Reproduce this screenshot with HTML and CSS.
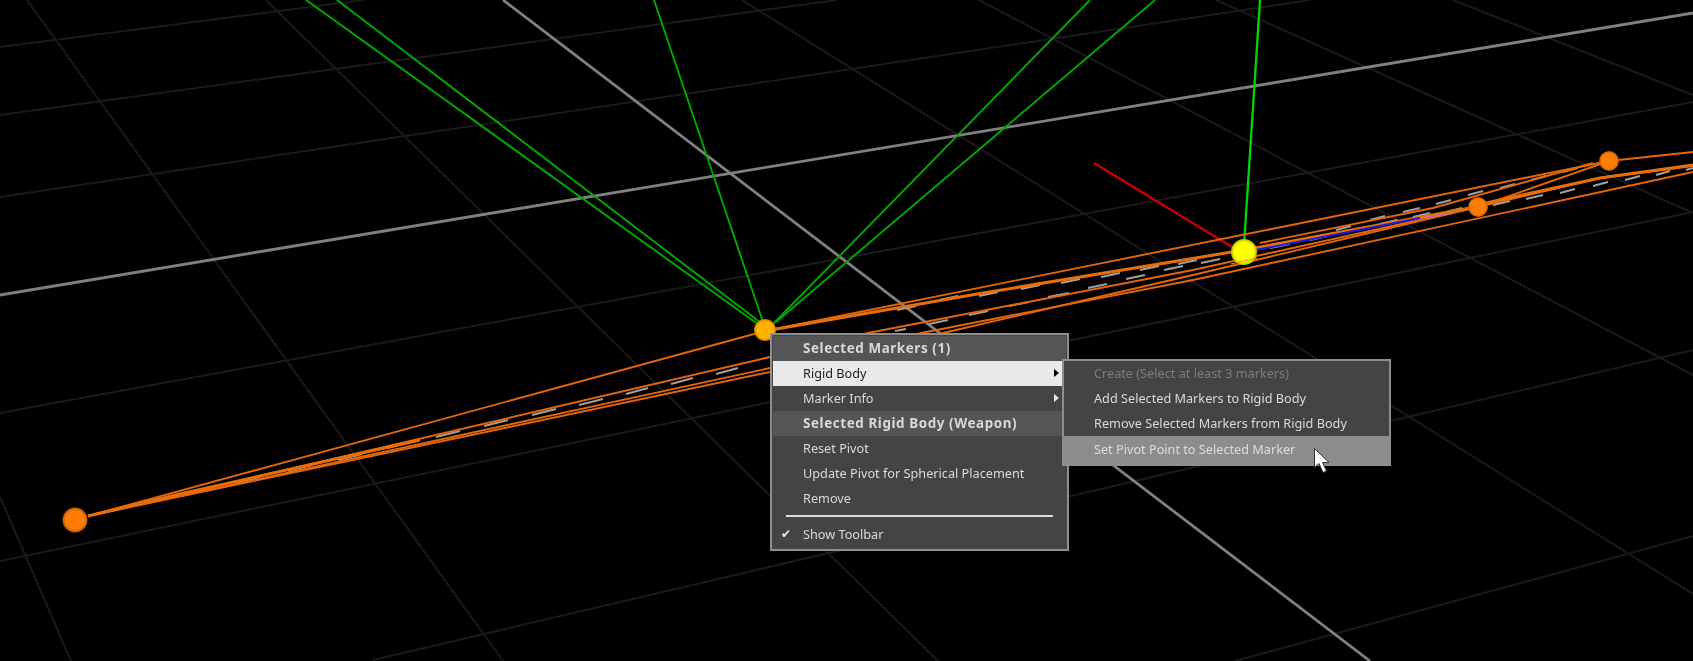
FILE: index.html
```html
<!DOCTYPE html>
<html lang="en">
<head>
<meta charset="utf-8">
<title>Selected Markers context menu</title>
<link rel="stylesheet" href="styles.css">
</head>
<body>
<main class="viewport">
  <svg class="scene" viewBox="0 0 1693 661" width="1693" height="661" aria-hidden="true">
    <g class="grid">
      <line x1="0" y1="47" x2="364" y2="0"/>
      <line x1="0" y1="115" x2="837" y2="0"/>
      <line x1="0" y1="197" x2="1310" y2="0"/>
      <line x1="0" y1="413" x2="1693" y2="102"/>
      <line x1="0" y1="561" x2="1693" y2="212"/>
      <line x1="373" y1="660" x2="1693" y2="350"/>
      <line x1="1235" y1="661" x2="1693" y2="536"/>
      <line x1="0" y1="497" x2="71" y2="661"/>
      <line x1="27" y1="0" x2="503" y2="661"/>
      <line x1="266" y1="0" x2="938" y2="661"/>
      <line x1="742" y1="0" x2="1693" y2="594"/>
      <line x1="979" y1="0" x2="1693" y2="375"/>
      <line x1="1216" y1="0" x2="1693" y2="213"/>
      <line x1="1453" y1="0" x2="1693" y2="95"/>
    </g>
    <g class="axis">
      <line x1="0" y1="295" x2="1693" y2="13"/>
      <line x1="503" y1="0" x2="1370" y2="661"/>
    </g>
    <g class="rays">
      <line x1="306" y1="0" x2="759" y2="325"/>
      <line x1="337" y1="0" x2="761" y2="323"/>
      <line x1="654" y1="0" x2="763" y2="322"/>
      <line x1="1090" y1="0" x2="772" y2="325"/>
      <line x1="1155" y1="0" x2="776" y2="322"/>
    </g>
    <line class="ray-bright" x1="1260" y1="0" x2="1244" y2="245"/>
    <line class="ray-red" x1="1094" y1="163" x2="1232" y2="247"/>
    <path class="dashes" d="M187 494L211 488M236 483L260 477M288 471L312 465M338 460L362 454M387 448L411 442M436 437L460 431M484 426L508 420M532 415L556 409M579 405L603 399M626 394L648 388M671 384L693 378M716 374L738 368M897 310L916 306M939 300L958 296M979 296L998 292M1021 289L1040 285M1061 283L1080 279M1101 277L1120 273M1140 270L1159 266M1178 264L1197 260M1268 247L1285 243M1300 240L1318 236M1336 230L1351 226M1370 220L1385 216M1403 212L1420 208M1436 204L1451 200M1468 195L1483 191M1500 188L1515 184M1531 180L1546 176M1563 172L1578 168M895 331L906 329M929 324L948 320M969 315L988 311M1009 306L1029 302M1048 297L1069 293M1088 288L1107 284M1126 279L1145 275M1164 270L1183 266M1201 263L1220 259M1240 254L1258 250M1270 248L1290 244M1310 240L1328 236M1345 232L1362 228M1380 224L1397 220M1413 217L1430 213M1446 212L1462 208M1493 205L1510 201M1526 199L1543 195M1560 193L1575 189M1593 186L1608 182M1625 180L1640 176M1656 175L1670 171M1686 170L1693 168"/>
    <g class="bonds">
      <polyline points="88,516 765,331 1609,161 1693,152"/>
      <polyline points="88,516 770,357 868,333 1193,270 1478,207 1609,161"/>
      <polyline points="88,516 770,368 943,333 1193,275 1478,207"/>
      <polyline points="88,516 770,372 921,333 1193,280 1693,172"/>
      <polyline points="1260,243 1433,208 1593,163"/>
      <polyline points="1478,207 1600,178 1693,166"/>
    </g>
    <g class="bonds-thick">
      <polyline points="88,516 180,494 420,440"/>
      <polyline points="765,331 983,293 1244,250 1470,208"/>
      <polyline points="1486,203 1600,178 1693,165"/>
    </g>
    <line class="blue" x1="1256" y1="250" x2="1420" y2="218"/>
    <line class="pink" x1="1420" y1="218" x2="1452" y2="213"/>
    <defs>
      <radialGradient id="glow-orange">
        <stop offset="0.75" stop-color="#ff7c05"/>
        <stop offset="1" stop-color="#b85600"/>
      </radialGradient>
      <radialGradient id="glow-gold">
        <stop offset="0.78" stop-color="#ffb000"/>
        <stop offset="1" stop-color="#c07000"/>
      </radialGradient>
      <radialGradient id="glow-yellow">
        <stop offset="0.75" stop-color="#ffff00"/>
        <stop offset="1" stop-color="#b8b800"/>
      </radialGradient>
    </defs>
    <circle cx="75" cy="520" r="12.5" fill="url(#glow-orange)"/>
    <circle cx="1478" cy="207" r="10" fill="url(#glow-orange)"/>
    <circle cx="1609" cy="161" r="10" fill="url(#glow-orange)"/>
    <circle cx="765" cy="330" r="11" fill="url(#glow-gold)"/>
    <circle cx="1244" cy="252" r="13" fill="url(#glow-yellow)"/>
    <line class="over-yellow" x1="1231" y1="264" x2="1257" y2="258"/>
  </svg>

  <nav class="menu main-menu">
    <div class="item heading">Selected Markers (1)</div>
    <div class="item active">Rigid Body<span class="arrow arrow-dark"></span></div>
    <div class="item">Marker Info<span class="arrow"></span></div>
    <div class="item heading">Selected Rigid Body (Weapon)</div>
    <div class="item">Reset Pivot</div>
    <div class="item">Update Pivot for Spherical Placement</div>
    <div class="item">Remove</div>
    <div class="separator"></div>
    <div class="item"><span class="check">✔</span>Show Toolbar</div>
  </nav>

  <nav class="menu sub-menu">
    <div class="item disabled">Create (Select at least 3 markers)</div>
    <div class="item">Add Selected Markers to Rigid Body</div>
    <div class="item">Remove Selected Markers from Rigid Body</div>
    <div class="item hover">Set Pivot Point to Selected Marker</div>
  </nav>

  <svg class="cursor" viewBox="0 0 16 25" width="16" height="25" aria-hidden="true">
    <path d="M0.5 0.5V19.5L5 15.5L9 24.5L12.5 23L8.5 14.5H15Z"/>
  </svg>
</main>
</body>
</html>
```

FILE: styles.css
```css
* {
  box-sizing: border-box;
}

html,
body {
  margin: 0;
  background: #000;
}

body {
  overflow: hidden;
}

.viewport {
  position: relative;
  width: 1693px;
  height: 661px;
  overflow: hidden;
  background: #000;
  font-family: "Noto Sans", "Liberation Sans", sans-serif;
  font-size: 12.7px;
}

.scene {
  display: block;
  filter: blur(0.5px);
}

.grid line {
  stroke: #1a1a1a;
  stroke-width: 2;
}

.axis line {
  stroke: #808080;
  stroke-width: 2.8;
}

.rays line {
  stroke: #00aa00;
  stroke-width: 1.9;
}

.ray-bright {
  stroke: #00d800;
  stroke-width: 2.3;
}

.ray-red {
  stroke: #cc0000;
  stroke-width: 2.3;
}

.dashes {
  fill: none;
  stroke: #a0a0a0;
  stroke-width: 2;
}

.bonds polyline {
  fill: none;
  stroke: #e4660c;
  stroke-width: 1.9;
}

.bonds-thick polyline {
  fill: none;
  stroke: #e86e0c;
  stroke-width: 3;
}

.blue {
  stroke: #1a1ae0;
  stroke-width: 2;
}

.pink {
  stroke: #c070b0;
  stroke-width: 1.5;
}

.over-yellow {
  stroke: #e0a000;
  stroke-width: 1.2;
}

.menu {
  position: absolute;
  display: flex;
  flex-direction: column;
  background: #444;
  border: 2px solid #8e8e8e;
  color: #d9d9d9;
  filter: blur(0.25px);
}

.main-menu {
  left: 770px;
  top: 333px;
  width: 299px;
  height: 218px;
  padding: 1px;
}

.sub-menu {
  left: 1062px;
  top: 359px;
  width: 329px;
  height: 107px;
}

.item {
  display: flex;
  align-items: center;
  height: 25px;
  padding: 0 0 2px 30px;
  flex: none;
}

.sub-menu .item {
  padding-left: 30px;
}

.heading {
  background: #555;
  padding-bottom: 1px;
  font-size: 13.4px;
  font-weight: 700;
  letter-spacing: 0.6px;
}

.active {
  background: #e9e9e9;
  color: #1c1c28;
}

.disabled {
  color: #7c7c7c;
}

.hover {
  flex: 1;
  background: #8c8c8c;
  color: #dcdcdc;
}

.arrow {
  margin-left: auto;
  margin-right: 7px;
  width: 0;
  height: 0;
  border-style: solid;
  border-width: 4.5px 0 4.5px 5px;
  border-color: transparent transparent transparent #e8e8e8;
}

.arrow-dark {
  border-left-color: #000;
}

.separator {
  flex: none;
  height: 2px;
  margin: 4px 13px 5px 13px;
  background: #dcdcdc;
}

.check {
  position: absolute;
  left: 9px;
  font-family: "DejaVu Sans", sans-serif;
  font-size: 12px;
  color: #e8e8e8;
}

.cursor {
  position: absolute;
  left: 1314px;
  top: 448px;
}

.cursor path {
  fill: #fff;
  stroke: #333;
  stroke-width: 1;
}
```
